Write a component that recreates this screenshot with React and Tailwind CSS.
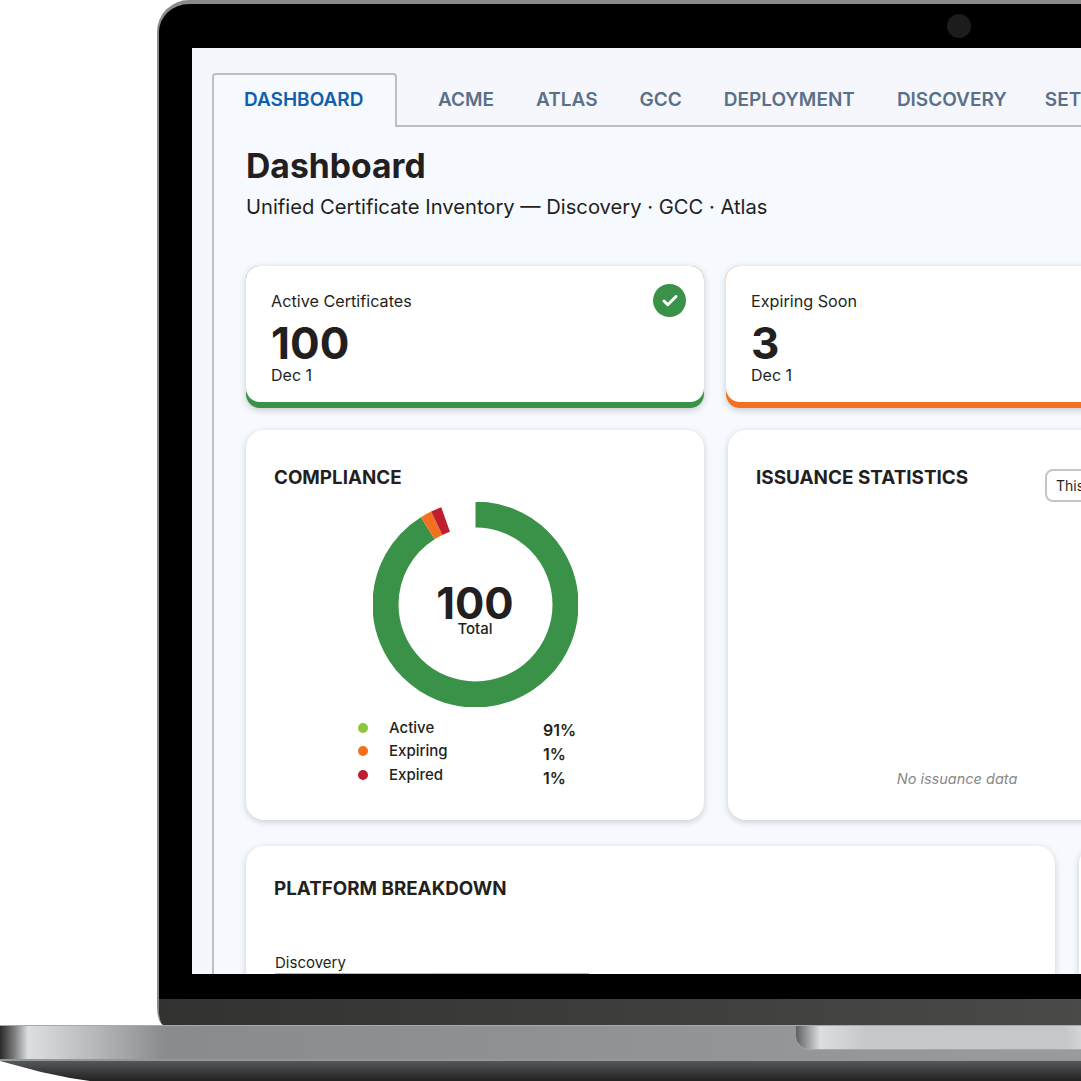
import { Check } from "lucide-react";

const tabs = ["ACME", "ATLAS", "GCC", "DEPLOYMENT", "DISCOVERY", "SETTINGS"];

const legend = [
  { label: "Active", dot: "bg-[#8cc63f]" },
  { label: "Expiring", dot: "bg-[#f37021]" },
  { label: "Expired", dot: "bg-[#be1e2d]" },
];

const percents = ["91%", "1%", "1%"];

function StatCard({ title, value, accent, icon }) {
  return (
    <div className={`w-[458px] h-[142px] shrink-0 rounded-[14px] pb-[6px] shadow-[0_2px_7px_rgba(0,0,0,0.2)] ${accent}`}>
      <div className="h-[136px] rounded-[14px] bg-white pl-[25px] pr-[18px] pt-[18px] flex justify-between">
        <div className="text-[#231f20]">
          <p className="text-[16.2px] leading-[34px]">{title}</p>
          <p className="text-[44px] font-bold leading-[38px] mt-[6px]">{value}</p>
          <p className="text-[16px] leading-[20px] mt-[3px]">Dec 1</p>
        </div>
        {icon}
      </div>
    </div>
  );
}

function Donut() {
  return (
    <div className="relative w-[205px] h-[205px] mx-auto mt-[12px]">
      <svg viewBox="0 0 205 205" className="w-[205px] h-[205px] -rotate-90">
        <circle cx="102.5" cy="102.5" r="90" fill="none" stroke="#3a9148" strokeWidth="26" pathLength="100" strokeDasharray="91.1 8.9" />
        <circle cx="102.5" cy="102.5" r="90" fill="none" stroke="#f37021" strokeWidth="26" pathLength="100" strokeDasharray="1.8 98.2" strokeDashoffset="-91.1" />
        <circle cx="102.5" cy="102.5" r="90" fill="none" stroke="#be1e2d" strokeWidth="26" pathLength="100" strokeDasharray="1.7 98.3" strokeDashoffset="-92.9" />
      </svg>
      <div className="absolute inset-0 flex flex-col items-center pt-[83px] text-[#231f20]">
        <span className="text-[43.5px] font-bold leading-[36px]">100</span>
        <span className="text-[15px] font-medium leading-[14px] mt-[1px]">Total</span>
      </div>
    </div>
  );
}

export default function App() {
  return (
    <div className="w-[1081px] h-[1081px] overflow-hidden bg-white font-[Inter,sans-serif]">
      {/* lid */}
      <div className="relative ml-[157px] w-[1000px] h-[1025px] bg-black border-t-[4px] border-l-[2px] border-[#8a8a8a] rounded-tl-[32px] rounded-bl-[7px_18px] overflow-hidden">
        <div className="absolute left-[788px] top-[10px] w-[24px] h-[24px] rounded-full bg-[#1c1c1c]"></div>
        <div className="ml-[33px] mt-[44px] h-[926px] bg-[#f5f7fc] overflow-hidden">
          <div className="pt-[25px] pl-[20px]">
            {/* tabs */}
            <div className="flex items-start h-[54px] border-b-2 border-[#bcc0c5] text-[19px] font-semibold">
              <div className="w-[185px] shrink-0 h-[54px] pl-[30px] pb-[2px] flex items-center rounded-t-[4px] border-2 border-b-0 border-[#bcc0c5] bg-[#f6f9fd] text-[#0f5fae]">
                DASHBOARD
              </div>
              <div className="ml-[20px] flex h-[52px] pt-[2px] items-center text-[#5a7088]">
                {tabs.map((tab) => (
                  <span key={tab} className="px-[21px] last:ml-[-4px] whitespace-nowrap">{tab}</span>
                ))}
              </div>
            </div>

            {/* page */}
            <div className="h-[900px] border-l-2 border-[#bcc0c5] bg-[#f6f9fd] pl-[32px] pt-[19px]">
              <h1 className="text-[33.7px] font-bold leading-[40px] text-[#231f20]">Dashboard</h1>
              <p className="text-[20.2px] leading-[28px] mt-[7px] text-[#231f20]">
                Unified Certificate Inventory — Discovery · GCC · Atlas
              </p>

              <div className="flex gap-[22px] mt-[45px]">
                <StatCard
                  title="Active Certificates"
                  value="100"
                  accent="bg-[#3a9148]"
                  icon={
                    <div className="w-[33px] h-[33px] rounded-full bg-[#3a9148] flex items-center justify-center">
                      <Check size={18} strokeWidth={4} color="#fff" />
                    </div>
                  }
                />
                <StatCard title="Expiring Soon" value="3" accent="bg-[#f37021]" />
              </div>

              <div className="flex gap-[24px] mt-[22px]">
                <div className="w-[458px] h-[390px] shrink-0 rounded-[18px] bg-white pt-[36px] shadow-[0_2px_7px_rgba(0,0,0,0.18)] text-[#231f20]">
                  <h2 className="pl-[28px] text-[18.8px] font-bold leading-[24px]">COMPLIANCE</h2>
                  <Donut />
                  <div className="flex ml-[112px] mt-[9px]">
                    <div className="w-[185px] text-[15px] font-medium">
                      {legend.map((item) => (
                        <div key={item.label} className="flex items-center h-[23.5px]">
                          <span className={`w-[10px] h-[10px] rounded-full ${item.dot}`}></span>
                          <span className="ml-[21px]">{item.label}</span>
                        </div>
                      ))}
                    </div>
                    <div className="text-[16px] font-semibold pt-[2px]">
                      {percents.map((p, i) => (
                        <div key={i} className="h-[24px] leading-[24px]">{p}</div>
                      ))}
                    </div>
                  </div>
                </div>

                <div className="w-[458px] h-[390px] shrink-0 rounded-[18px] bg-white pt-[36px] pb-[31px] shadow-[0_2px_7px_rgba(0,0,0,0.18)] flex flex-col text-[#231f20]">
                  <div className="flex items-start pl-[28px]">
                    <h2 className="text-[18.9px] font-bold leading-[24px] w-[289px] shrink-0">ISSUANCE STATISTICS</h2>
                    <div className="mt-[3px] h-[33px] px-[9px] flex items-center rounded-[8px] border-2 border-[#c4c4c4] text-[14px] whitespace-nowrap">
                      This month
                    </div>
                  </div>
                  <p className="mt-auto text-center text-[14.5px] italic leading-[20px] text-[#888888]">No issuance data</p>
                </div>
              </div>

              <div className="flex gap-[24px] mt-[26px]">
                <div className="w-[809px] h-[300px] shrink-0 rounded-[18px] bg-white pt-[31px] shadow-[0_2px_7px_rgba(0,0,0,0.18)] text-[#231f20]">
                  <h2 className="pl-[28px] text-[18.8px] font-bold leading-[24px]">PLATFORM BREAKDOWN</h2>
                  <p className="pl-[29px] mt-[52px] text-[15px] leading-[20px]">Discovery</p>
                  <div className="flex ml-[29px] h-[3px] w-[314px]">
                    <div className="w-[158px] bg-[#9ccb9d]"></div>
                    <div className="w-[156px] bg-[#e0a985]"></div>
                  </div>
                </div>
                <div className="w-[300px] h-[300px] shrink-0 rounded-[18px] bg-white shadow-[0_2px_7px_rgba(0,0,0,0.18)]"></div>
              </div>
            </div>
          </div>
        </div>
        <div className="h-[25px] bg-black"></div>
        <div className="h-[26px] bg-[linear-gradient(90deg,#323231,#3e3e3c_50%,#4c4c4a_100%)]"></div>
      </div>

      {/* base */}
      <div className="h-[36px] border-t border-b-[2px] border-t-[#a8a9aa] border-b-[#8f9a9d] bg-[linear-gradient(90deg,#2a2a2a_0px,#7a7a7a_14px,#dcdee0_28px,#bdbec0_85px,#8a8b8c_165px,#8f9091_500px,#9a9b9d_1081px)] flex justify-end">
        <div className="w-[285px] h-[24px] rounded-bl-[14px] border-b border-[#a8a8a8] bg-[linear-gradient(90deg,#5a6064_0px,#dcdee0_24px,#c6c7c9_70px,#c6c7c9_270px,#d4d5d6_285px)]"></div>
      </div>
      <div className="h-[20px] [clip-path:polygon(0_0,41px_11px,70px_17px,90px_20px,100%_20px,100%_0)] bg-[linear-gradient(180deg,#55575a,#212121)]"></div>
    </div>
  );
}
